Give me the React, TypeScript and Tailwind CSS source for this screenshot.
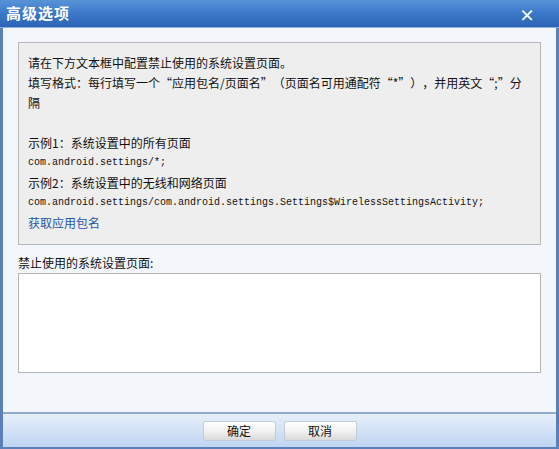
export default function App() {
  return (
    <div
      lang="zh-CN"
      className="w-[559px] h-[449px] flex flex-col bg-[#f3f7fc] border-x-[3px] border-b-[2px] border-[#5b7fb8] font-['Noto_Sans_CJK_SC','Liberation_Sans',sans-serif] text-[12px] text-[#111] [text-spacing-trim:space-all]"
    >
      {/* Title bar */}
      <div className="h-[28px] -mx-[3px] flex items-center justify-between px-[6px] bg-gradient-to-b from-[#5893d8] via-[#3c78c8] to-[#2d63b6] border-b border-[#8fb0de]">
        <span className="text-white text-[15px] font-bold tracking-[1px]">高级选项</span>
        <span className="text-white text-[16px] font-bold leading-none mr-[18px]">×</span>
      </div>

      <div className="flex-1 flex flex-col px-[15px] pt-[14px]">
        {/* Info box */}
        <div className="h-[203px] bg-[#eeeeee] border border-[#b8b8b8] pl-[9px] pt-[10px] leading-[20px]">
          <p>请在下方文本框中配置禁止使用的系统设置页面。</p>
          <p>
            填写格式：每行填写一个“应用包名/页面名”（页面名可用通配符“*”），并用英文“;”分
            <br />隔
          </p>
          <p className="h-[20px]" />
          <p>示例1：系统设置中的所有页面</p>
          <p className="font-['Liberation_Mono',monospace] text-[10px]">com.android.settings/*;</p>
          <p>示例2：系统设置中的无线和网络页面</p>
          <p className="font-['Liberation_Mono',monospace] text-[10px]">
            com.android.settings/com.android.settings.Settings$WirelessSettingsActivity;
          </p>
          <a className="text-[#1f56a8]">获取应用包名</a>
        </div>

        <div className="mt-[8px] leading-[20px]">禁止使用的系统设置页面:</div>
        <textarea className="h-[100px] bg-white border border-[#b4b4b4] resize-none outline-none" />
        <div className="flex-1" />
      </div>

      {/* Footer */}
      <div className="h-[35px] border-t-2 border-[#8fa9cf] bg-gradient-to-b from-[#e6eff9] to-[#bfd5f2] flex items-center justify-center gap-[8px] pt-[1px]">
        <button className="w-[73px] h-[20px] bg-gradient-to-b from-[#ffffff] via-[#f2f2f2] to-[#d9d9d9] border border-[#c4ccd8] rounded-[2px] text-[12px] leading-none">
          确定
        </button>
        <button className="w-[73px] h-[20px] bg-gradient-to-b from-[#ffffff] via-[#f2f2f2] to-[#d9d9d9] border border-[#c4ccd8] rounded-[2px] text-[12px] leading-none">
          取消
        </button>
      </div>
    </div>
  );
}
